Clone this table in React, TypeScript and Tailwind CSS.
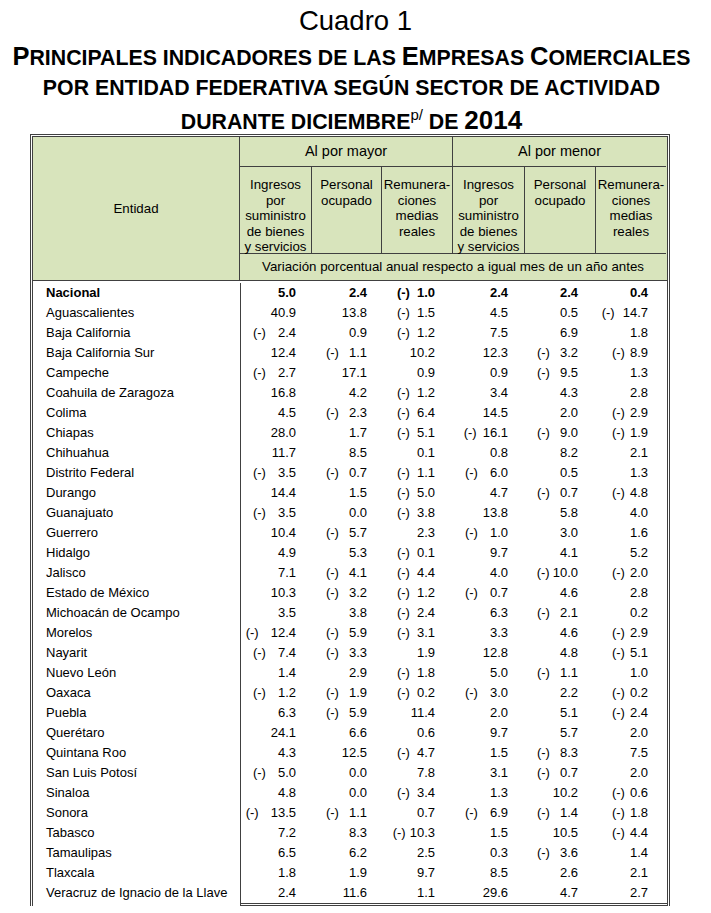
const rows: [string, string, string, string, string, string, string][] = [
  ["Nacional", "5.0", "2.4", "-1.0", "2.4", "2.4", "0.4"],
  ["Aguascalientes", "40.9", "13.8", "-1.5", "4.5", "0.5", "-14.7"],
  ["Baja California", "-2.4", "0.9", "-1.2", "7.5", "6.9", "1.8"],
  ["Baja California Sur", "12.4", "-1.1", "10.2", "12.3", "-3.2", "-8.9"],
  ["Campeche", "-2.7", "17.1", "0.9", "0.9", "-9.5", "1.3"],
  ["Coahuila de Zaragoza", "16.8", "4.2", "-1.2", "3.4", "4.3", "2.8"],
  ["Colima", "4.5", "-2.3", "-6.4", "14.5", "2.0", "-2.9"],
  ["Chiapas", "28.0", "1.7", "-5.1", "-16.1", "-9.0", "-1.9"],
  ["Chihuahua", "11.7", "8.5", "0.1", "0.8", "8.2", "2.1"],
  ["Distrito Federal", "-3.5", "-0.7", "-1.1", "-6.0", "0.5", "1.3"],
  ["Durango", "14.4", "1.5", "-5.0", "4.7", "-0.7", "-4.8"],
  ["Guanajuato", "-3.5", "0.0", "-3.8", "13.8", "5.8", "4.0"],
  ["Guerrero", "10.4", "-5.7", "2.3", "-1.0", "3.0", "1.6"],
  ["Hidalgo", "4.9", "5.3", "-0.1", "9.7", "4.1", "5.2"],
  ["Jalisco", "7.1", "-4.1", "-4.4", "4.0", "-10.0", "-2.0"],
  ["Estado de México", "10.3", "-3.2", "-1.2", "-0.7", "4.6", "2.8"],
  ["Michoacán de Ocampo", "3.5", "3.8", "-2.4", "6.3", "-2.1", "0.2"],
  ["Morelos", "-12.4", "-5.9", "-3.1", "3.3", "4.6", "-2.9"],
  ["Nayarit", "-7.4", "-3.3", "1.9", "12.8", "4.8", "-5.1"],
  ["Nuevo León", "1.4", "2.9", "-1.8", "5.0", "-1.1", "1.0"],
  ["Oaxaca", "-1.2", "-1.9", "-0.2", "-3.0", "2.2", "-0.2"],
  ["Puebla", "6.3", "-5.9", "11.4", "2.0", "5.1", "-2.4"],
  ["Querétaro", "24.1", "6.6", "0.6", "9.7", "5.7", "2.0"],
  ["Quintana Roo", "4.3", "12.5", "-4.7", "1.5", "-8.3", "7.5"],
  ["San Luis Potosí", "-5.0", "0.0", "7.8", "3.1", "-0.7", "2.0"],
  ["Sinaloa", "4.8", "0.0", "-3.4", "1.3", "10.2", "-0.6"],
  ["Sonora", "-13.5", "-1.1", "0.7", "-6.9", "-1.4", "-1.8"],
  ["Tabasco", "7.2", "8.3", "-10.3", "1.5", "10.5", "-4.4"],
  ["Tamaulipas", "6.5", "6.2", "2.5", "0.3", "-3.6", "1.4"],
  ["Tlaxcala", "1.8", "1.9", "9.7", "8.5", "2.6", "2.1"],
  ["Veracruz de Ignacio de la Llave", "2.4", "11.6", "1.1", "29.6", "4.7", "2.7"],
];

// right padding of the number in each column
const pr = ["pr-[17px]", "pr-[16px]", "pr-[19px]", "pr-[18px]", "pr-[19px]", "pr-[19px]"];
// gap between "(-)" and the number: one-digit and two-digit values
const gap1 = ["mr-[12px]", "mr-[10px]", "mr-[7px]", "mr-[12px]", "mr-[10px]", "mr-[5px]"];
const gap2 = ["mr-[12px]", "mr-[10px]", "mr-[4px]", "mr-[6px]", "mr-[3px]", "mr-[8px]"];

function Value({ v, col }: { v: string; col: number }) {
  const neg = v.startsWith("-");
  const n = neg ? v.slice(1) : v;
  const gap = n.length > 3 ? gap2[col] : gap1[col];
  return (
    <div className={`flex h-5 items-center justify-end ${pr[col]}`}>
      {neg && <span className={gap}>(-)</span>}
      <span>{n}</span>
    </div>
  );
}

function Big({ children }: { children: string }) {
  return <span className="text-[25.5px] leading-none">{children}</span>;
}

const line = "border-[#404040]";
const cols = "grid-cols-[207px_72px_70px_71px_72px_71px_70px]";
const sub = `border-b ${line} pt-[10px] leading-[15.5px]`;

export default function App() {
  return (
    <div className="min-h-[913px] w-[711px] bg-white text-black font-['Liberation_Sans',Arial,sans-serif]">
      <div className="pt-[6px] text-center">
        <div className="text-[27.5px] leading-[30px]">Cuadro 1</div>
        <div className="pr-[8px]">
          <div className="mt-[6px] text-[21.3px] font-bold leading-[32px]">
            <Big>P</Big>RINCIPALES INDICADORES DE LAS <Big>E</Big>MPRESAS <Big>C</Big>OMERCIALES
          </div>
          <div className="text-[21.3px] font-bold leading-[28px]">
            POR ENTIDAD FEDERATIVA SEGÚN SECTOR DE ACTIVIDAD
          </div>
          <div className="mt-[5px] text-[21.3px] font-bold leading-[24px]">
            DURANTE DICIEMBRE
            <span className="relative -top-[9px] text-[15px] font-normal leading-none">p/</span> DE{" "}
            <span className="text-[26px] leading-none">2014</span>
          </div>
        </div>
      </div>

      <div className={`ml-[30px] w-[640px] border-[3px] border-b-0 border-double ${line} text-[13px]`}>
        <div className={`grid ${cols} grid-rows-[30px_87px_26px] border-b ${line} bg-[#d8e4bc] text-center text-[13.3px]`}>
          <div className={`row-span-3 flex items-center justify-center border-r ${line}`}>Entidad</div>
          <div className={`col-span-3 flex items-center justify-center border-r border-b ${line} text-[14.5px]`}>
            Al por mayor
          </div>
          <div className={`col-span-3 flex items-center justify-center border-b ${line} text-[14.5px]`}>
            Al por menor
          </div>
          {[0, 1].map((g) => (
            <div key={g} className="contents">
              <div className={`border-r ${sub}`}>
                Ingresos
                <br />
                por
                <br />
                suministro
                <br />
                de bienes
                <br />y servicios
              </div>
              <div className={`border-r ${sub}`}>
                Personal
                <br />
                ocupado
              </div>
              <div className={`${g === 0 ? "border-r" : ""} ${sub}`}>
                Remunera-
                <br />
                ciones
                <br />
                medias
                <br />
                reales
              </div>
            </div>
          ))}
          <div className="col-span-6 flex items-center justify-center">
            Variación porcentual anual respecto a igual mes de un año antes
          </div>
        </div>

        <div className="flex pt-[2px]">
          <div className={`w-[208px] border-r ${line}`}>
            {rows.map((r) => (
              <div key={r[0]} className={`flex h-5 items-center pl-[13px] ${r[0] === "Nacional" ? "font-bold" : ""}`}>
                {r[0]}
              </div>
            ))}
          </div>
          <div className={`flex-1 border-b-[3px] border-double ${line}`}>
            {rows.map((r) => (
              <div key={r[0]} className={`grid grid-cols-[72px_70px_71px_72px_71px_70px] ${r[0] === "Nacional" ? "font-bold" : ""}`}>
                {r.slice(1).map((v, i) => (
                  <Value key={i} v={v} col={i} />
                ))}
              </div>
            ))}
          </div>
        </div>
      </div>
    </div>
  );
}
